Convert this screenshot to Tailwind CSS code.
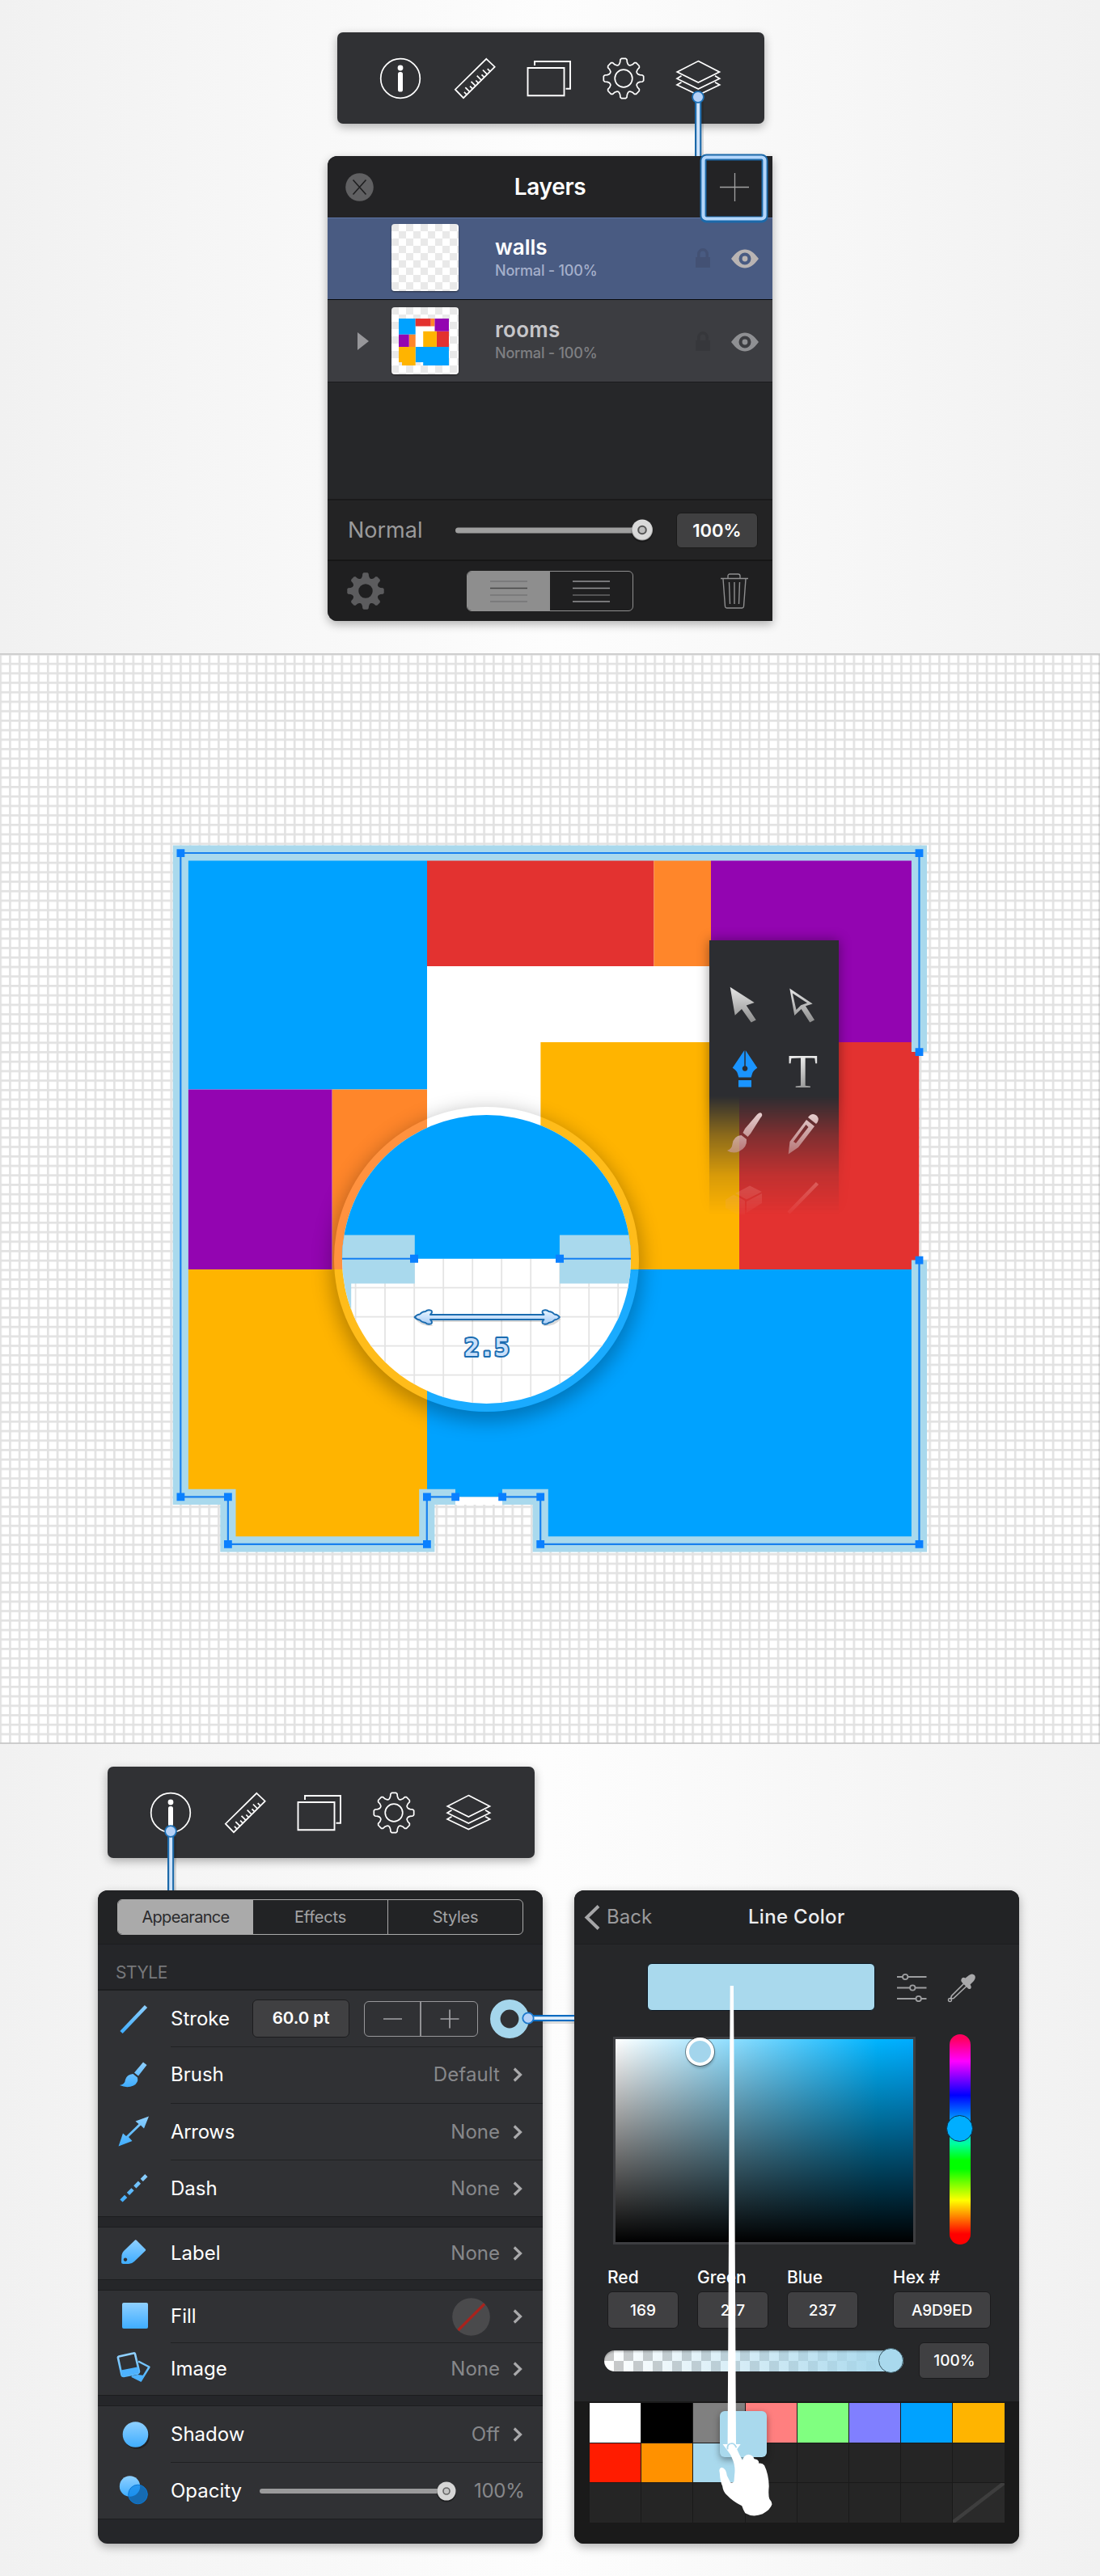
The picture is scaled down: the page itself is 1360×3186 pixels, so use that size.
<!DOCTYPE html>
<html lang="en">
<head>
<meta charset="utf-8">
<title>Floor plan tutorial</title>
<script src="https://cdn.jsdelivr.net/npm/@tailwindcss/browser@4"></script>
</head>
<body class="w-[1360px] bg-white font-['Inter',sans-serif] leading-none">

<!-- shared shapes -->
<svg width="0" height="0" class="absolute">
  <defs>
    <linearGradient id="sky" x1="0" y1="0" x2="0" y2="1"><stop offset="0" stop-color="#8fd0ff"/><stop offset="1" stop-color="#3fadff"/></linearGradient>
    <linearGradient id="skyLine" gradientUnits="userSpaceOnUse" x1="0" y1="4" x2="0" y2="38"><stop offset="0" stop-color="#8fd0ff"/><stop offset="1" stop-color="#3fadff"/></linearGradient>
    <linearGradient id="silver" x1="0" y1="0" x2="0" y2="1"><stop offset="0" stop-color="#e6e6e6"/><stop offset="1" stop-color="#8d8d8d"/></linearGradient>
    <linearGradient id="silverText" gradientUnits="userSpaceOnUse" x1="0" y1="1304" x2="0" y2="1345"><stop offset="0" stop-color="#f0f0f0"/><stop offset="1" stop-color="#9a9a9a"/></linearGradient>
    <linearGradient id="rose" x1="0" y1="0" x2="0" y2="1"><stop offset="0" stop-color="#f3dcdc"/><stop offset="1" stop-color="#c99a9a"/></linearGradient>
    <linearGradient id="ice" x1="0" y1="0" x2="0" y2="1"><stop offset="0" stop-color="#ecf6ff"/><stop offset="1" stop-color="#a5cbf5"/></linearGradient>
  </defs>
  <symbol id="i-info" viewBox="0 0 60 60"><circle cx="30" cy="30" r="24.3" fill="none" stroke="#fff" stroke-width="1.7"/><circle cx="30" cy="17" r="3.4" fill="#fff"/><rect x="27" y="22" width="6" height="24.5" rx="2.6" fill="#fff"/></symbol>
  <symbol id="i-ruler" viewBox="0 0 60 60"><g fill="none" stroke="#fff" stroke-width="1.7"><path d="M44.3 5.8 54.7 15.7 16 54.2 5.8 43.7Z"/><path d="M20.5 50.5l-3.6-3.6M24.1 46.9l-5.8-5.8M27.7 43.3l-3.6-3.6M31.3 39.7l-5.8-5.8M34.9 36.1l-3.6-3.6M38.5 32.5l-5.8-5.8M42.1 28.9l-3.6-3.6M45.7 25.3l-5.8-5.8M49.3 21.7l-3.6-3.6"/></g></symbol>
  <symbol id="i-frames" viewBox="0 0 60 60"><path d="M3.5 17H48.5V51.2H3.5ZM12 14V9H56V42.8H50.5" fill="none" stroke="#fff" stroke-width="1.9"/></symbol>
  <symbol id="i-gear" viewBox="0 0 60 60"><g fill="none" stroke="#fff" stroke-width="1.7" stroke-linejoin="round"><path d="M47.6 24.6 50 25.6 53.4 26 54.7 27.4V32.6L53.4 34 50 34.4 47.6 35.4Q45.6 37.5 46.3 38.7L47.2 41 49.4 43.4 49.3 45.5 45.5 49.3 43.4 49.4 41 47.2 38.7 46.3Q36.4 45.8 35.4 47.6L34.4 50 34 53.4 32.6 54.7H27.4L26 53.4 25.6 50 24.6 47.6Q23.6 45.8 21.3 46.3L19 47.2 16.6 49.4 14.5 49.3 10.7 45.5 10.6 43.4 12.8 41 13.7 38.7Q14.4 37.5 12.4 35.4L10 34.4 6.6 34 5.3 32.6V27.4L6.6 26 10 25.6 12.4 24.6Q14.4 22.5 13.7 21.3L12.8 19 10.6 16.6 10.7 14.5 14.5 10.7 16.6 10.6 19 12.8 21.3 13.7Q23.6 14.2 24.6 12.4L25.6 10 26 6.6 27.4 5.3H32.6L34 6.6 34.4 10 35.4 12.4Q36.4 14.2 38.7 13.7L41 12.8 43.4 10.6 45.5 10.7 49.3 14.5 49.4 16.6 47.2 19 46.3 21.3Q45.6 22.5 47.6 24.6Z"/><circle cx="30" cy="30" r="10.8"/></g></symbol>
  <symbol id="i-layers" viewBox="0 0 60 60"><path d="M30.3 8.6 56.5 22 30.3 35 4.2 22ZM9.5 26.8 4 30.2 30.3 43 56.7 30.2 51 26.8M9.5 34.8 4 38 30.3 50.5 56.7 38 51 34.8" fill="none" stroke="#fff" stroke-width="1.7"/></symbol>
  <symbol id="i-eye" viewBox="0 0 34 24"><path fill="currentColor" fill-rule="evenodd" d="M0 12C6 4 11 .5 17 .5S28 4 34 12C28 20 23 23.500 17 23.500S6 20 0 12ZM17 4.500a7.500 7.500 0 1 0 0 15a7.500 7.500 0 1 0 0-15Z"/><circle cx="17" cy="12" r="3.400" fill="currentColor"/></symbol>
  <symbol id="i-lock" viewBox="0 0 18 24"><path fill="currentColor" d="M0 11H2V7.500A7 7.500 0 0 1 16 7.500V11H18V24H0ZM5.500 11H12.500V7.500A3.500 4 0 0 0 5.500 7.500Z"/></symbol>
  <symbol id="i-chev" viewBox="0 0 12 18"><path d="M1.800 1.500 9.500 9 1.800 16.500" fill="none" stroke="#a9a9ab" stroke-width="3.200"/></symbol>
  <symbol id="plan" viewBox="223.300 1055 913.200 855">
    <path d="M223.300 1055H1136.500V1909.800H668.200V1851.300H527.800V1909.800H281.900V1851.300H223.300Z" fill="#fff"/>
    <path d="M223 1055H528V1347.500H223Z M528 1570H1136.500V1909.800H668.200V1851.300H528Z" fill="#00a2ff"/>
    <path d="M528 1055H808.500V1195H528Z M914 1289H1136.500V1570H914Z" fill="#e33230"/>
    <path d="M808.500 1055H879V1195H808.500Z M410.500 1347.500H528V1570H410.500Z" fill="#ff862a"/>
    <path d="M879 1055H1136.500V1289H879Z M223 1347.500H410.500V1570H223Z" fill="#9305b1"/>
    <path d="M668.400 1289H914V1570H668.400Z M223 1570H528V1909.800H281.900V1851.300H223Z" fill="#ffb400"/>
  </symbol>
</svg>

<!-- step 1: layers panel -->
<section class="relative h-[808px] overflow-hidden bg-[linear-gradient(to_right,#f1f1f1,#fdfdfd_50%,#f1f1f1)]">
  <div class="mt-10 ml-[417px] flex h-[113px] w-[528px] items-center rounded-[7px] bg-[#303134] px-8 shadow-[0_4px_12px_rgba(0,0,0,0.3)]">
    <div class="flex w-[92px] justify-center"><svg class="size-[60px]"><use href="#i-info"/></svg></div>
    <div class="flex w-[92px] justify-center"><svg class="size-[60px]"><use href="#i-ruler"/></svg></div>
    <div class="flex w-[92px] justify-center"><svg class="size-[60px]"><use href="#i-frames"/></svg></div>
    <div class="flex w-[92px] justify-center"><svg class="size-[60px]"><use href="#i-gear"/></svg></div>
    <div class="flex w-[92px] justify-center"><svg class="size-[60px]"><use href="#i-layers"/></svg></div>
  </div>

  <div class="mt-10 ml-[405px] h-[575px] w-[550px] overflow-hidden rounded-l-[12px] bg-[#262729] shadow-[0_4px_12px_rgba(0,0,0,0.3)]">
    <header class="flex h-[76px] items-center bg-[#232325]">
      <svg class="ml-[22px] size-[35px]" viewBox="0 0 35 35"><circle cx="17.500" cy="17.500" r="17.300" fill="#606062"/><path d="M9.500 8.500 25.500 26.500M25.500 8.500 9.500 26.500" stroke="#1f1f20" stroke-width="1.600"/></svg>
      <h2 class="flex-1 pl-[8px] text-center text-[28px] font-semibold tracking-[-0.300px] text-white">Layers</h2>
      <svg class="mr-[28px] size-[37px]" viewBox="0 0 37 37"><path d="M18.500 1V36M0 18.500H36" stroke="#a2a2a3" stroke-width="1.300"/></svg>
    </header>
    <div class="flex h-[101px] border-t border-[#5d74a4] bg-[#495b82] pl-[79px]">
      <div class="mt-[7px] size-[83px] rounded-[4px] bg-[repeating-conic-gradient(#fff_0_25%,#e9e9e9_0_50%)] bg-[length:18px_18px] shadow-[0_1px_2px_rgba(0,0,0,0.5)]"></div>
      <div class="ml-[45px] w-[248px] pt-[21px]">
        <div class="text-[26px] leading-[30px] font-semibold text-white">walls</div>
        <div class="text-[18px] leading-[28px] font-medium tracking-[-0.200px] text-[#a5b0cb]">Normal - 100%</div>
      </div>
      <svg class="mt-[37px] h-6 w-[18px] text-[#435174]"><use href="#i-lock"/></svg>
      <svg class="mt-[38px] ml-[26px] h-6 w-[34px] text-[#b9b4b3]"><use href="#i-eye"/></svg>
    </div>
    <div class="relative flex h-[103px] border-y border-t-[#07080c] border-b-[#1b1b1d] bg-[#3c3d41] pl-[79px]">
      <svg class="absolute top-[40px] left-[37px] h-[22px] w-[15px]" viewBox="0 0 15 22"><path d="M0 0 14 11 0 22Z" fill="#97979a"/></svg>
      <div class="relative mt-[9px] size-[83px] rounded-[4px] bg-[repeating-conic-gradient(#fff_0_25%,#e9e9e9_0_50%)] bg-[length:18px_18px] shadow-[0_1px_2px_rgba(0,0,0,0.5)]">
        <svg class="absolute top-[14px] left-[9px] h-[58px] w-[62px]"><use href="#plan"/></svg>
      </div>
      <div class="ml-[45px] w-[248px] pt-[22px]">
        <div class="text-[26px] leading-[30px] font-semibold tracking-[0.300px] text-[#c6c6c9]">rooms</div>
        <div class="text-[18px] leading-[28px] font-medium tracking-[-0.200px] text-[#7f8083]">Normal - 100%</div>
      </div>
      <svg class="mt-[39px] h-6 w-[18px] text-[#36373b]"><use href="#i-lock"/></svg>
      <svg class="mt-[40px] ml-[26px] h-6 w-[34px] text-[#8f9093]"><use href="#i-eye"/></svg>
    </div>
    <div class="h-[144px]"></div>
    <div class="flex h-[75px] items-center border-t-2 border-[#1a1a1b] bg-[#232324] pl-[25px]">
      <span class="w-[133px] text-[27px] leading-[30px] text-[#9a9a9b]">Normal</span>
      <svg class="h-9 w-[245px]" viewBox="0 0 245 36"><rect y="14.500" width="240" height="7" rx="3.500" fill="#9f9f9f"/><circle cx="231" cy="19" r="13.500" fill="#000" opacity=".35"/><circle cx="231" cy="17.500" r="13" fill="url(#silver)"/><circle cx="231" cy="17.500" r="12" fill="#d9d9d9"/><circle cx="231" cy="17.500" r="4.800" fill="#bdbdbd" stroke="#555" stroke-width="2"/></svg>
      <div class="ml-[28px] flex h-[44px] w-[101px] items-center justify-center rounded-[6px] border border-[#1a1a1a] bg-[#404041] text-[22px] font-semibold text-white">100%</div>
    </div>
    <footer class="flex h-[76px] items-center border-t-2 border-[#161616] bg-[#1f1f20]">
      <svg class="ml-[24px] size-[46px]" viewBox="5 5 50 50"><path fill="#5c5c5e" fill-rule="evenodd" d="M47.600 24.600 50 25.600 53.400 26 54.700 27.400V32.600L53.400 34 50 34.400 47.600 35.400Q45.600 37.500 46.300 38.700L47.200 41 49.400 43.400 49.300 45.500 45.500 49.300 43.400 49.400 41 47.200 38.700 46.300Q36.400 45.800 35.400 47.600L34.400 50 34 53.400 32.600 54.700H27.400L26 53.400 25.600 50 24.600 47.600Q23.600 45.800 21.300 46.300L19 47.200 16.600 49.400 14.500 49.300 10.700 45.500 10.600 43.400 12.800 41 13.700 38.700Q14.400 37.500 12.400 35.400L10 34.400 6.600 34 5.300 32.600V27.400L6.600 26 10 25.600 12.400 24.600Q14.400 22.500 13.700 21.300L12.800 19 10.600 16.600 10.700 14.500 14.500 10.700 16.600 10.600 19 12.800 21.300 13.700Q23.600 14.200 24.600 12.400L25.600 10 26 6.600 27.400 5.300H32.600L34 6.600 34.400 10 35.400 12.400Q36.400 14.200 38.700 13.700L41 12.800 43.400 10.600 45.500 10.700 49.300 14.500 49.400 16.600 47.200 19 46.300 21.300Q45.600 22.500 47.600 24.600ZM30 20.500a9.500 9.500 0 1 0 0 19a9.500 9.500 0 1 0 0-19Z"/></svg>
      <div class="ml-[102px] flex h-[50px] w-[206px] overflow-hidden rounded-[6px] border border-[#8f8f8f]">
        <div class="flex w-1/2 items-center justify-center bg-[#8e8e8e]"><svg class="h-7 w-[46px]"><path d="M0 2H46M0 19H46M0 27H46" stroke="#767677" stroke-width="1.500"/><path d="M0 10.500H46" stroke="#474748" stroke-width="1.700"/></svg></div>
        <div class="flex w-1/2 items-center justify-center"><svg class="h-7 w-[46px]"><path d="M0 2H46M0 10.500H46M0 27H46" stroke="#959596" stroke-width="1.600"/><path d="M0 19H46" stroke="#666" stroke-width="1.500"/></svg></div>
      </div>
      <svg class="ml-[108px] h-[44px] w-[34px]" viewBox="0 0 34 44" fill="none" stroke="#8e8e8f" stroke-width="1.400"><path d="M0 6.500H34M9 6V3.500Q9 1 11.500 1H21.500Q24 1 24 3.500V6M3 7 5.500 41Q5.800 43 7.500 43H26.500Q28.200 43 28.500 41L31 7M10.500 11 11.500 38M17 11V38M23.500 11 22.500 38"/></svg>
    </footer>
  </div>

  <svg class="absolute top-[112px] left-[850px] h-[170px] w-[105px]" viewBox="850 112 105 170">
    <rect x="867" y="126" width="3" height="67" fill="#000" opacity=".12"/>
    <rect x="859" y="122" width="8.300" height="71" fill="#1c69a9"/><rect x="861.200" y="122" width="4" height="71" fill="#cfe4fb"/>
    <circle cx="863" cy="120" r="6.900" fill="#b5d2f8" stroke="#1c6fb4" stroke-width="1.800"/>
    <rect x="869.500" y="194.500" width="76" height="77" rx="4" fill="none" stroke="#1c69a9" stroke-width="8"/>
    <rect x="869.500" y="194.500" width="76" height="76" rx="4" fill="none" stroke="#b3d6fb" stroke-width="4.200"/>
  </svg>
</section>

<!-- step 2: floor plan canvas -->
<section class="relative h-[1349px] overflow-hidden">
  <svg class="block h-[1349px] w-[1360px]" viewBox="0 808 1360 1349">
    <defs>
      <pattern id="grid" patternUnits="userSpaceOnUse" x="-0.600" y="808" width="11.724" height="11.715"><path d="M0 1.300H11.724M1.300 0V11.715" stroke="#000" stroke-opacity=".115" stroke-width="2.600"/></pattern>
    </defs>
    <rect y="808" width="1360" height="1349" fill="#fff"/>
    <rect y="808" width="1360" height="1349" fill="url(#grid)"/>
    <path d="M0 808.800H1360M0 2156H1360M1359 808V2157" stroke="#000" stroke-opacity=".1" stroke-width="2"/>
    <use href="#plan" x="223.300" y="1055" width="913.200" height="855"/>
    <g fill="none" stroke="#a9d9ed" stroke-width="19.200">
      <path d="M1136.500 1301V1055H223.300V1851.300H281.900V1909.800H527.800V1851.300H563"/>
      <path d="M621 1851.300H668.200V1909.800H1136.500V1558.500"/>
    </g>
    <path d="M563 1852H621V1861H563Z" fill="#fff"/>
    <g fill="none" stroke="#1880ee" stroke-width="2.200">
      <path d="M1136.500 1301V1055H223.300V1851.300H281.900V1909.800H527.800V1851.300H563"/>
      <path d="M621 1851.300H668.200V1909.800H1136.500V1558.500"/>
    </g>
    <path fill="#0a80ff" d="M218.500 1050.200h9.800v9.800h-9.800zM1131.600 1050.200h9.800v9.800h-9.800zM1131.600 1296.200h9.800v9.800h-9.800zM1131.600 1553.700h9.800v9.800h-9.800zM1131.600 1905h9.800v9.800h-9.800zM218.500 1846.500h9.800v9.800h-9.800zM277 1846.500h9.800v9.800h-9.800zM277 1905h9.800v9.800h-9.800zM523 1905h9.800v9.800h-9.800zM523 1846.500h9.800v9.800h-9.800zM558.200 1846.500h9.800v9.800h-9.800zM616.200 1846.500h9.800v9.800h-9.800zM663.300 1846.500h9.800v9.800h-9.800zM663.300 1905h9.800v9.800h-9.800z"/>
  </svg>

  <!-- magnifier -->
  <div class="absolute top-[561px] left-[413px] size-[377px] rounded-full border-[10px] border-white/10 shadow-[0_8px_24px_4px_rgba(0,0,0,0.28)]">
    <svg class="size-[357px] rounded-full" viewBox="423 1379 357 357">
      <rect x="423" y="1379" width="357" height="357" fill="#fff"/>
      <path d="M439.600 1557V1736M476 1557V1736M512.200 1557V1736M548.200 1557V1736M584.200 1557V1736M620.200 1557V1736M656.200 1557V1736M692.200 1557V1736M728.200 1557V1736M764.200 1557V1736M423 1592.700H780M423 1628.700H780M423 1664.700H780M423 1700.700H780" stroke="#e4e4e4" stroke-width="1.800"/>
      <rect x="423" y="1379" width="357" height="177.800" fill="#00a2ff"/>
      <path d="M423 1527.400H512.800V1587.500H434.200V1736H423ZM691.900 1527.400H780V1587.500H691.900Z" fill="#a9d9ed"/>
      <path d="M423 1556.700H512M692 1556.700H780" stroke="#1480f2" stroke-width="2"/>
      <path d="M507 1551.800h10v10h-10zM687 1551.800h10v10h-10z" fill="#0a80ff"/>
      <g transform="translate(1 2.500)" opacity=".15"><path d="M512.500 1629Q519 1620 534 1620.500L531 1625.500H673.500L670.500 1620.500Q686 1620 692 1629Q686 1638 670.500 1637.500L673.500 1632.500H531L534 1637.500Q519 1638 512.500 1629Z"/></g>
      <path d="M512.500 1629Q516 1625.500 519 1625.500Q522 1622 526 1622Q529 1619 533.500 1621Q535 1623 532 1626H672.500Q669.500 1623 671 1621Q675.500 1619 678.500 1622Q682.500 1622 685.500 1625.500Q689 1625.500 692 1629Q689 1632.500 685.500 1632.500Q682.500 1636 678.500 1636Q675.500 1639 671 1637Q669.500 1635 672.500 1632H532Q535 1635 533.500 1637Q529 1639 526 1636Q522 1636 519 1632.500Q516 1632.500 512.500 1629Z" fill="url(#ice)" stroke="#1b6cb0" stroke-width="1.900" stroke-linejoin="round"/>
      <text x="602" y="1677" text-anchor="middle" font-family="DejaVu Sans Mono" font-weight="700" font-size="31" fill="#c9e0fa" stroke="#1b6cb0" stroke-width="4" stroke-linejoin="round" paint-order="stroke">2.5</text>
    </svg>
  </div>

  <!-- tool palette: the padding keeps its shadow inside the fading mask -->
  <div class="absolute top-[335px] left-[857px] h-[367px] w-[200px] overflow-hidden px-5 pt-5 [mask-image:linear-gradient(to_bottom,#000_58%,rgba(0,0,0,0.550)_71%,rgba(0,0,0,0.180)_85%,transparent_98%)]">
    <div class="h-[380px] w-[160px] bg-[#2c2d31] shadow-[0_0_14px_rgba(0,0,0,0.4)]"></div>
  </div>
  <svg class="absolute top-[355px] left-[877px] h-[347px] w-[160px] [mask-image:linear-gradient(to_bottom,#000_57%,rgba(0,0,0,0.800)_70%,rgba(0,0,0,0.600)_78%,rgba(0,0,0,0.300)_88%,transparent_100%)]" viewBox="877 1163 160 347">
    <path d="M902.700 1220.700 932.700 1240 922.700 1243.600 934.700 1261.400 928.700 1264.600 917 1247.900 908.700 1255.700Z" fill="url(#silver)"/>
    <path fill-rule="evenodd" d="M976.300 1222.500 1004.700 1241.400 996 1244.300 1007 1261.400 1001.300 1264.600 990.700 1247.900 982.300 1256ZM979.800 1228.500 984.500 1249 990.200 1243.200 998 1240.500Z" fill="url(#silver)"/>
    <path fill-rule="evenodd" d="M920.300 1299V1318.300A3.300 3.300 0 1 0 921.800 1318.300V1299L936.300 1320.700Q931 1324 930 1328L928.700 1332.500H913.300L912 1328Q911 1324 905.700 1320.700ZM913 1336H929V1344.600H913Z" fill="#1a94ff"/>
    <text x="992.800" y="1344.500" text-anchor="middle" font-family="Liberation Serif" font-size="60" fill="url(#silverText)">T</text>
    <path d="M941 1376.500Q944 1379 940 1383L928 1402 924.500 1406 918.500 1401 921 1396 936 1378.500Q939 1375.500 941 1376.500ZM916.500 1404 923 1409Q924 1419 914 1424 906 1427.500 899 1423Q905 1421 905.500 1415 907 1405 916.500 1404Z" fill="url(#rose)"/>
    <path fill-rule="evenodd" d="M999 1382Q1004 1375 1010 1380 1014 1385 1009 1390ZM997 1385 1007 1393 987 1419 974.700 1427.500 976.500 1412ZM996.500 1391 981 1412 984 1414 999.500 1394Z" fill="url(#rose)"/>
    <path d="M897 1484 907 1477.500 921 1485V1502L911 1502 897 1494ZM909 1476 927 1466.500 942 1474 923 1483.500ZM942 1476V1488L923 1500V1486Z" fill="#f7a9a0" fill-opacity=".75"/>
    <path d="M1010.500 1463.500 975 1500" stroke="#ffb0ac" stroke-width="4.500"/>
  </svg>
</section>

<!-- step 3: stroke style and colour -->
<section class="relative flex h-[1029px] items-start gap-[39px] overflow-hidden bg-[linear-gradient(to_right,#f1f1f1,#fdfdfd_50%,#f1f1f1)] pl-[121px]">
  <div class="w-[550px]">
    <div class="mt-7 ml-3 flex h-[113px] w-[528px] items-center rounded-[7px] bg-[#303134] px-8 shadow-[0_4px_12px_rgba(0,0,0,0.3)]">
      <div class="flex w-[92px] justify-center"><svg class="size-[60px]"><use href="#i-info"/></svg></div>
      <div class="flex w-[92px] justify-center"><svg class="size-[60px]"><use href="#i-ruler"/></svg></div>
      <div class="flex w-[92px] justify-center"><svg class="size-[60px]"><use href="#i-frames"/></svg></div>
      <div class="flex w-[92px] justify-center"><svg class="size-[60px]"><use href="#i-gear"/></svg></div>
      <div class="flex w-[92px] justify-center"><svg class="size-[60px]"><use href="#i-layers"/></svg></div>
    </div>

    <div class="mt-10 h-[808px] overflow-hidden rounded-[12px] bg-[#252629] text-[24px] text-white shadow-[0_4px_12px_rgba(0,0,0,0.3)]">
      <div class="flex h-[67px] items-start border-b border-[#1d1e20] bg-[#222325] px-6 pt-[11px]">
        <div class="flex h-[44px] w-[502px] overflow-hidden rounded-[6px] border-[1.500px] border-[#aaa] text-[20px] text-[#a3a3a5]">
          <div class="flex w-[167px] items-center justify-center bg-[#aaa] tracking-[-0.700px] text-[#2b2b2d]">Appearance</div>
          <div class="flex w-[167px] items-center justify-center border-r border-[#aaa] tracking-[-0.200px]">Effects</div>
          <div class="flex flex-1 items-center justify-center tracking-[-0.300px]">Styles</div>
        </div>
      </div>
      <div class="h-[57px] border-b-2 border-[#1d1e20] pt-[24px] pl-[22px] text-[21px] tracking-[-0.450px] text-[#77787b]">STYLE</div>

      <div class="bg-[#303134]">
        <div class="flex h-[69px] items-center pl-[22px]">
          <svg class="h-[42px] w-[44px]"><path d="M7 37.500 37.500 5.500" stroke="url(#skyLine)" stroke-width="4.500"/></svg>
          <span class="ml-6 w-[101px]">Stroke</span>
          <div class="flex h-[47px] w-[120px] items-center justify-center rounded-[6px] border border-[#1c1c1e] bg-[#404042] text-[20.500px] font-semibold">60.0 pt</div>
          <div class="ml-[18px] flex h-[44px] w-[141px] items-center rounded-[6px] border-[1.500px] border-[#97979a]">
            <svg class="h-[42px] w-[138px]"><path d="M69 0V42M23 21H46M93.500 21H116.500M105 9.500V32.500" stroke="#a3a3a6" stroke-width="1.700"/></svg>
          </div>
          <svg class="ml-[14px] size-[50px]"><circle cx="25" cy="25" r="17.700" fill="none" stroke="#a5d6ec" stroke-width="12.600"/></svg>
        </div>
        <div class="flex h-[70px] items-center pl-[22px]">
          <svg class="h-[42px] w-[44px]"><path d="M34 5.500 38.500 9 28 22.500 23 18.500ZM21.500 20 27 24.500Q28.500 31 22 34.500 14 38 5 34 11.500 33 12 27 14 20.500 21.500 20Z" fill="url(#sky)"/></svg>
          <div class="ml-6 flex h-full flex-1 items-center border-t border-[#202123] pr-[25px] pb-px"><span class="flex-1">Brush</span><span class="tracking-[0.100px] text-[#87888b]">Default</span><svg class="ml-4 h-[18px] w-3"><use href="#i-chev"/></svg></div>
        </div>
        <div class="flex h-[70px] items-center pl-[22px]">
          <svg class="h-[42px] w-[44px]"><path d="M41 2.500 35 17.500 31 13.500 16 28 20.500 33 3.500 39.500 9 23.500 13 27 28.500 12 24.500 8.500Z" fill="url(#sky)"/></svg>
          <div class="ml-6 flex h-full flex-1 items-center border-t border-[#202123] pr-[25px]"><span class="flex-1 tracking-[-0.300px]">Arrows</span><span class="text-[#87888b]">None</span><svg class="ml-4 h-[18px] w-3"><use href="#i-chev"/></svg></div>
        </div>
        <div class="flex h-[71px] items-center border-b border-[#1c1d1f] pl-[22px]">
          <svg class="h-[42px] w-[44px]"><path d="M7 37 38 5.500" stroke="url(#skyLine)" stroke-width="4.500" stroke-dasharray="8 4"/></svg>
          <div class="ml-6 flex h-full flex-1 items-center border-t border-[#202123] pr-[25px]"><span class="flex-1">Dash</span><span class="text-[#87888b]">None</span><svg class="ml-4 h-[18px] w-3"><use href="#i-chev"/></svg></div>
        </div>
      </div>

      <div class="mt-[12px] flex h-[66px] items-center border-y border-[#1c1d1f] bg-[#303134] pl-[22px]">
        <svg class="h-[42px] w-[44px]"><path fill-rule="evenodd" d="M24 4.500Q25 4 26 5L37 16Q37.500 17 36.500 18L23 31Q20 34 16 34H9.500Q7 34 7 31.500L7.500 23Q8 20 10 18ZM12 26.500a2.200 2.200 0 1 0 .01 0Z" fill="url(#sky)"/></svg>
        <span class="ml-6 flex-1">Label</span><span class="text-[#87888b]">None</span><svg class="mr-[25px] ml-4 h-[18px] w-3"><use href="#i-chev"/></svg>
      </div>

      <div class="mt-[12px] border-y border-[#1c1d1f] bg-[#303134]">
        <div class="flex h-[64px] items-center pl-[22px]">
          <svg class="h-[42px] w-[44px]"><rect x="8" y="4" width="32" height="32" rx="2" fill="url(#sky)"/></svg>
          <span class="ml-6 flex-1">Fill</span>
          <svg class="mr-[28px] size-[48px]"><circle cx="24.500" cy="24.500" r="23.300" fill="#4a4a4c"/><path d="M8.500 41 41 8.500" stroke="#a8231d" stroke-width="3.200"/></svg>
          <svg class="mr-[25px] h-[18px] w-3"><use href="#i-chev"/></svg>
        </div>
        <div class="flex h-[65px] items-center pl-[22px]">
          <svg class="h-[42px] w-[46px]" fill="none" stroke="url(#skyLine)"><path d="M28 11.500 41.500 18.500 31 35.500 20 30" stroke-width="2.400" stroke-linejoin="round"/><path d="M19 30 31.500 36.500 35.500 29 27 28Z" fill="#4db2ff" stroke="none"/><path d="M3 7.500Q2.500 6 4 5.500L22 1.500Q23.500 1 24 2.500L29 24Q29 26 27.500 26.500L10 30Q8 30 7.500 28.500Z" fill="#303134" stroke-width="2.600"/><path d="M6.500 22.500 27 18.500 28.500 25.500 9 29.500Z" fill="#4db2ff" stroke="none"/></svg>
          <div class="ml-[22px] flex h-full flex-1 items-center border-t border-[#202123] pr-[25px]"><span class="flex-1">Image</span><span class="text-[#87888b]">None</span><svg class="ml-4 h-[18px] w-3"><use href="#i-chev"/></svg></div>
        </div>
      </div>

      <div class="mt-[12px] border-y border-[#1c1d1f] bg-[#303134]">
        <div class="flex h-[69px] items-center pl-[22px]">
          <svg class="h-[42px] w-[44px]"><circle cx="26" cy="23" r="16" fill="#18181a" opacity=".6"/><circle cx="24.500" cy="21" r="15.800" fill="url(#sky)"/></svg>
          <span class="ml-6 flex-1">Shadow</span><span class="text-[#87888b]">Off</span><svg class="mr-[25px] ml-4 h-[18px] w-3"><use href="#i-chev"/></svg>
        </div>
        <div class="flex h-[70px] items-center pl-[22px]">
          <svg class="h-[42px] w-[44px]"><circle cx="17.500" cy="16" r="12.700" fill="url(#sky)"/><circle cx="27.500" cy="26" r="11.800" fill="#0b85e8" fill-opacity=".7" stroke="#0a78d6"/></svg>
          <div class="ml-6 flex h-full flex-1 items-center border-t border-[#202123]"><span class="w-[110px]">Opacity</span>
            <svg class="h-8 w-[246px]"><rect y="13" width="240" height="6" rx="3" fill="#9a9a9b"/><circle cx="231" cy="17.500" r="12" opacity=".4"/><circle cx="231" cy="16" r="11.500" fill="#d6d6d6"/><circle cx="231" cy="16" r="4" fill="#c4c4c4" stroke="#666" stroke-width="1.600"/></svg>
            <span class="ml-[19px] tracking-[-0.300px] text-[#87888b]">100%</span></div>
        </div>
      </div>
    </div>
  </div>

  <!-- line colour -->
  <div class="mt-[181px] h-[808px] w-[550px] overflow-hidden rounded-[12px] bg-[#262729] text-white shadow-[0_4px_12px_rgba(0,0,0,0.3)]">
    <header class="flex h-[67px] items-center border-b border-[#1d1e20] bg-[#222325] text-[24px]">
      <svg class="ml-3 h-[31px] w-[20px]"><path d="M18 1.500 3.500 15.500 18 29.500" fill="none" stroke="#a6a6a8" stroke-width="4"/></svg>
      <span class="ml-2 w-[120px] text-[#9a9a9c]">Back</span>
      <h2 class="ml-[55px] font-medium tracking-[0.300px] text-[#ededee]">Line Color</h2>
    </header>
    <div class="flex h-[114px] items-start pt-[23px] pl-[90px]">
      <div class="h-[59px] w-[282px] rounded-[6px] border border-[#0c1923] bg-[#a9d9ed]"></div>
      <svg class="mt-[12px] ml-[27px] h-9 w-[37px]" fill="none" stroke="#9d9ea0" stroke-width="1.800"><path d="M0 5H7M14 5H36.500M0 18.500H16M23 18.500H36.500M0 32H23M30 32H36.500"/><circle cx="10.200" cy="5" r="3.200"/><circle cx="19.300" cy="18.500" r="3.200"/><circle cx="26.700" cy="32" r="3.200"/></svg>
      <svg class="mt-[12px] ml-[24px] size-[38px]" viewBox="0 0 38 38"><path d="M22.500 12.500 6.500 28.500 5.500 32 9 31.500 26 15.500" fill="none" stroke="#a9a9ab" stroke-width="1.700"/><circle cx="4.500" cy="33.500" r="2" fill="none" stroke="#a9a9ab" stroke-width="1.400"/><path d="M18.500 8Q20 4.500 23.500 6.500L28 3Q32 0 35 3 37 6 34 10L29.500 14.500Q32 18 29.500 20 27.500 20.500 26 18.500L19.500 12Q17.500 10 18.500 8Z" fill="#a9a9ab"/></svg>
    </div>
    <div class="flex h-[257px] pl-[48px]">
      <div class="relative h-[257px] w-[374px] border-[3px] border-[#3d3e41] bg-[linear-gradient(to_top,#000,transparent),linear-gradient(to_right,#fff,#00b4ff_88%,#00acff)]">
        <div class="absolute -top-[2px] left-[87px] size-[35px] rounded-full border-4 border-white bg-[#a3d5ec] shadow-[0_0_0_1px_rgba(0,0,0,0.4),1px_3px_3px_rgba(0,0,0,0.2)]"></div>
      </div>
      <div class="relative ml-[42px] h-[260px] w-[26px] -translate-y-[3px] rounded-full bg-[linear-gradient(to_bottom,#ff0060_2%,#ff00ff_12.8%,#0000ff_29%,#00aeff_42%,#00ffa0_52%,#00ff00_60%,#00ff00_64%,#ffff00_79%,#ff0000_95%)]">
        <div class="absolute top-[100px] -left-[4px] size-[33px] rounded-full border border-[#0a3550] bg-[#00aeff]"></div>
      </div>
    </div>
    <div class="mt-[27px] flex pl-[41px] text-[21px] font-medium">
      <div class="w-[111px]"><div class="h-[31px] pt-[3px]">Red</div><div class="flex h-[46px] w-[88px] items-center justify-center rounded-[6px] border border-[#1b1b1d] bg-[#404042] text-[19px]">169</div></div>
      <div class="w-[111px]"><div class="h-[31px] pt-[3px]">Green</div><div class="flex h-[46px] w-[88px] items-center justify-center rounded-[6px] border border-[#1b1b1d] bg-[#404042] text-[19px]">217</div></div>
      <div class="w-[131px]"><div class="h-[31px] pt-[3px]">Blue</div><div class="flex h-[46px] w-[88px] items-center justify-center rounded-[6px] border border-[#1b1b1d] bg-[#404042] text-[19px]">237</div></div>
      <div><div class="h-[31px] pt-[3px]">Hex #</div><div class="flex h-[46px] w-[121px] items-center justify-center rounded-[6px] border border-[#1b1b1d] bg-[#404042] text-[19px] tracking-[-0.200px]">A9D9ED</div></div>
    </div>
    <div class="mt-[17px] flex items-center pl-[37px]">
      <div class="relative h-[26px] w-[370px] rounded-full bg-[linear-gradient(to_right,transparent,#a9d9ed_95%),repeating-conic-gradient(#fff_0_25%,#c8c8c8_0_50%)] bg-[length:100%_100%,24px_26px] shadow-[inset_0_2px_2px_rgba(0,0,0,0.2)]">
        <div class="absolute -top-[3px] right-0 size-[31px] rounded-full border border-[#3b5965] bg-[#a9d9ed]"></div>
      </div>
      <div class="ml-[19px] flex h-[45px] w-[88px] items-center justify-center rounded-[6px] border border-[#1b1b1d] bg-[#404042] text-[19px] font-medium">100%</div>
    </div>
    <div class="mt-[28px] h-[177px] bg-[#1a1a1a] pt-[2px] pl-[19px]">
      <div class="grid grid-cols-[repeat(8,63.200px)] auto-rows-[48.500px] gap-px">
        <i class="bg-white"></i><i class="bg-black"></i><i class="bg-[#808080]"></i><i class="bg-[#ff7f7f]"></i><i class="bg-[#80ff80]"></i><i class="bg-[#807fff]"></i><i class="bg-[#00a2ff]"></i><i class="bg-[#ffb400]"></i>
        <i class="bg-[#ff1c00]"></i><i class="bg-[#ff9100]"></i><i class="bg-[#a9d9ed]"></i><i class="bg-[#252525]"></i><i class="bg-[#252525]"></i><i class="bg-[#252525]"></i><i class="bg-[#252525]"></i><i class="bg-[#252525]"></i>
        <i class="bg-[#252525]"></i><i class="bg-[#252525]"></i><i class="bg-[#252525]"></i><i class="bg-[#252525]"></i><i class="bg-[#252525]"></i><i class="bg-[#252525]"></i><i class="bg-[#252525]"></i><i class="bg-[#2a2a2a]"><svg class="size-full" viewBox="0 0 63 48" preserveAspectRatio="none"><path d="M0 48 63 0" stroke="#3e3e3e" stroke-width="4.500"/></svg></i>
      </div>
    </div>
  </div>

  <!-- connectors -->
  <svg class="absolute top-[95px] left-[200px] h-[87px] w-[24px]" viewBox="200 2252 24 87">
    <rect x="215" y="2272" width="3" height="66" fill="#000" opacity=".12"/>
    <rect x="207" y="2268" width="8.200" height="70" fill="#1c69a9"/><rect x="209.200" y="2268" width="3.900" height="70" fill="#cfe4fb"/>
    <circle cx="211" cy="2265" r="6.900" fill="#b5d2f8" stroke="#1c6fb4" stroke-width="1.800"/>
  </svg>
  <svg class="absolute top-[328px] left-[640px] h-[24px] w-[70px]" viewBox="640 2485 70 24">
    <rect x="671" y="2500" width="39" height="3" fill="#000" opacity=".12"/>
    <rect x="656" y="2492" width="54" height="8" fill="#0b6bc0"/><rect x="656" y="2494.200" width="54" height="3.700" fill="#e3f0fc"/>
    <circle cx="653" cy="2496" r="6.700" fill="#b5d2f8" stroke="#1c78cc" stroke-width="1.800"/>
  </svg>

  <!-- drag gesture -->
  <div class="absolute top-[825px] left-[890px] h-[57px] w-[58px] rounded-[6px] bg-[#a9d9ed] shadow-[0_3px_8px_rgba(0,0,0,0.4)]"></div>
  <svg class="absolute top-[299px] left-[880px] h-[660px] w-[90px]" viewBox="880 2456 90 660">
    <path d="M902.700 2456H907L910 3023H915.700L904.800 3038 893.500 3023H899.600Z" fill="#fff"/>
    <path transform="translate(690 2780) scale(.3762 .3333)" fill="#fff" d="M571 728Q556 730 558 744L575 790Q583 815 580 840L578 868Q572 874 566 870L555 845Q552 818 538 815Q527 818 531 835Q533 870 540 884Q542 905 555 918Q575 942 604 958Q609 975 615 985Q640 1002 672 988Q698 972 703 952Q703 942 695 933Q690 920 693 885Q692 840 678 808Q672 798 660 800Q660 785 645 784Q640 768 625 767Q610 770 606 788Q596 770 588 748Q583 730 571 728Z"/>
    <path transform="translate(690 2780) scale(.3762 .3333)" d="M557 748Q554 727 571 726Q580 726 586 742" fill="none" stroke="#a9d9ed" stroke-width="5"/>
  </svg>
</section>
</body>
</html>
